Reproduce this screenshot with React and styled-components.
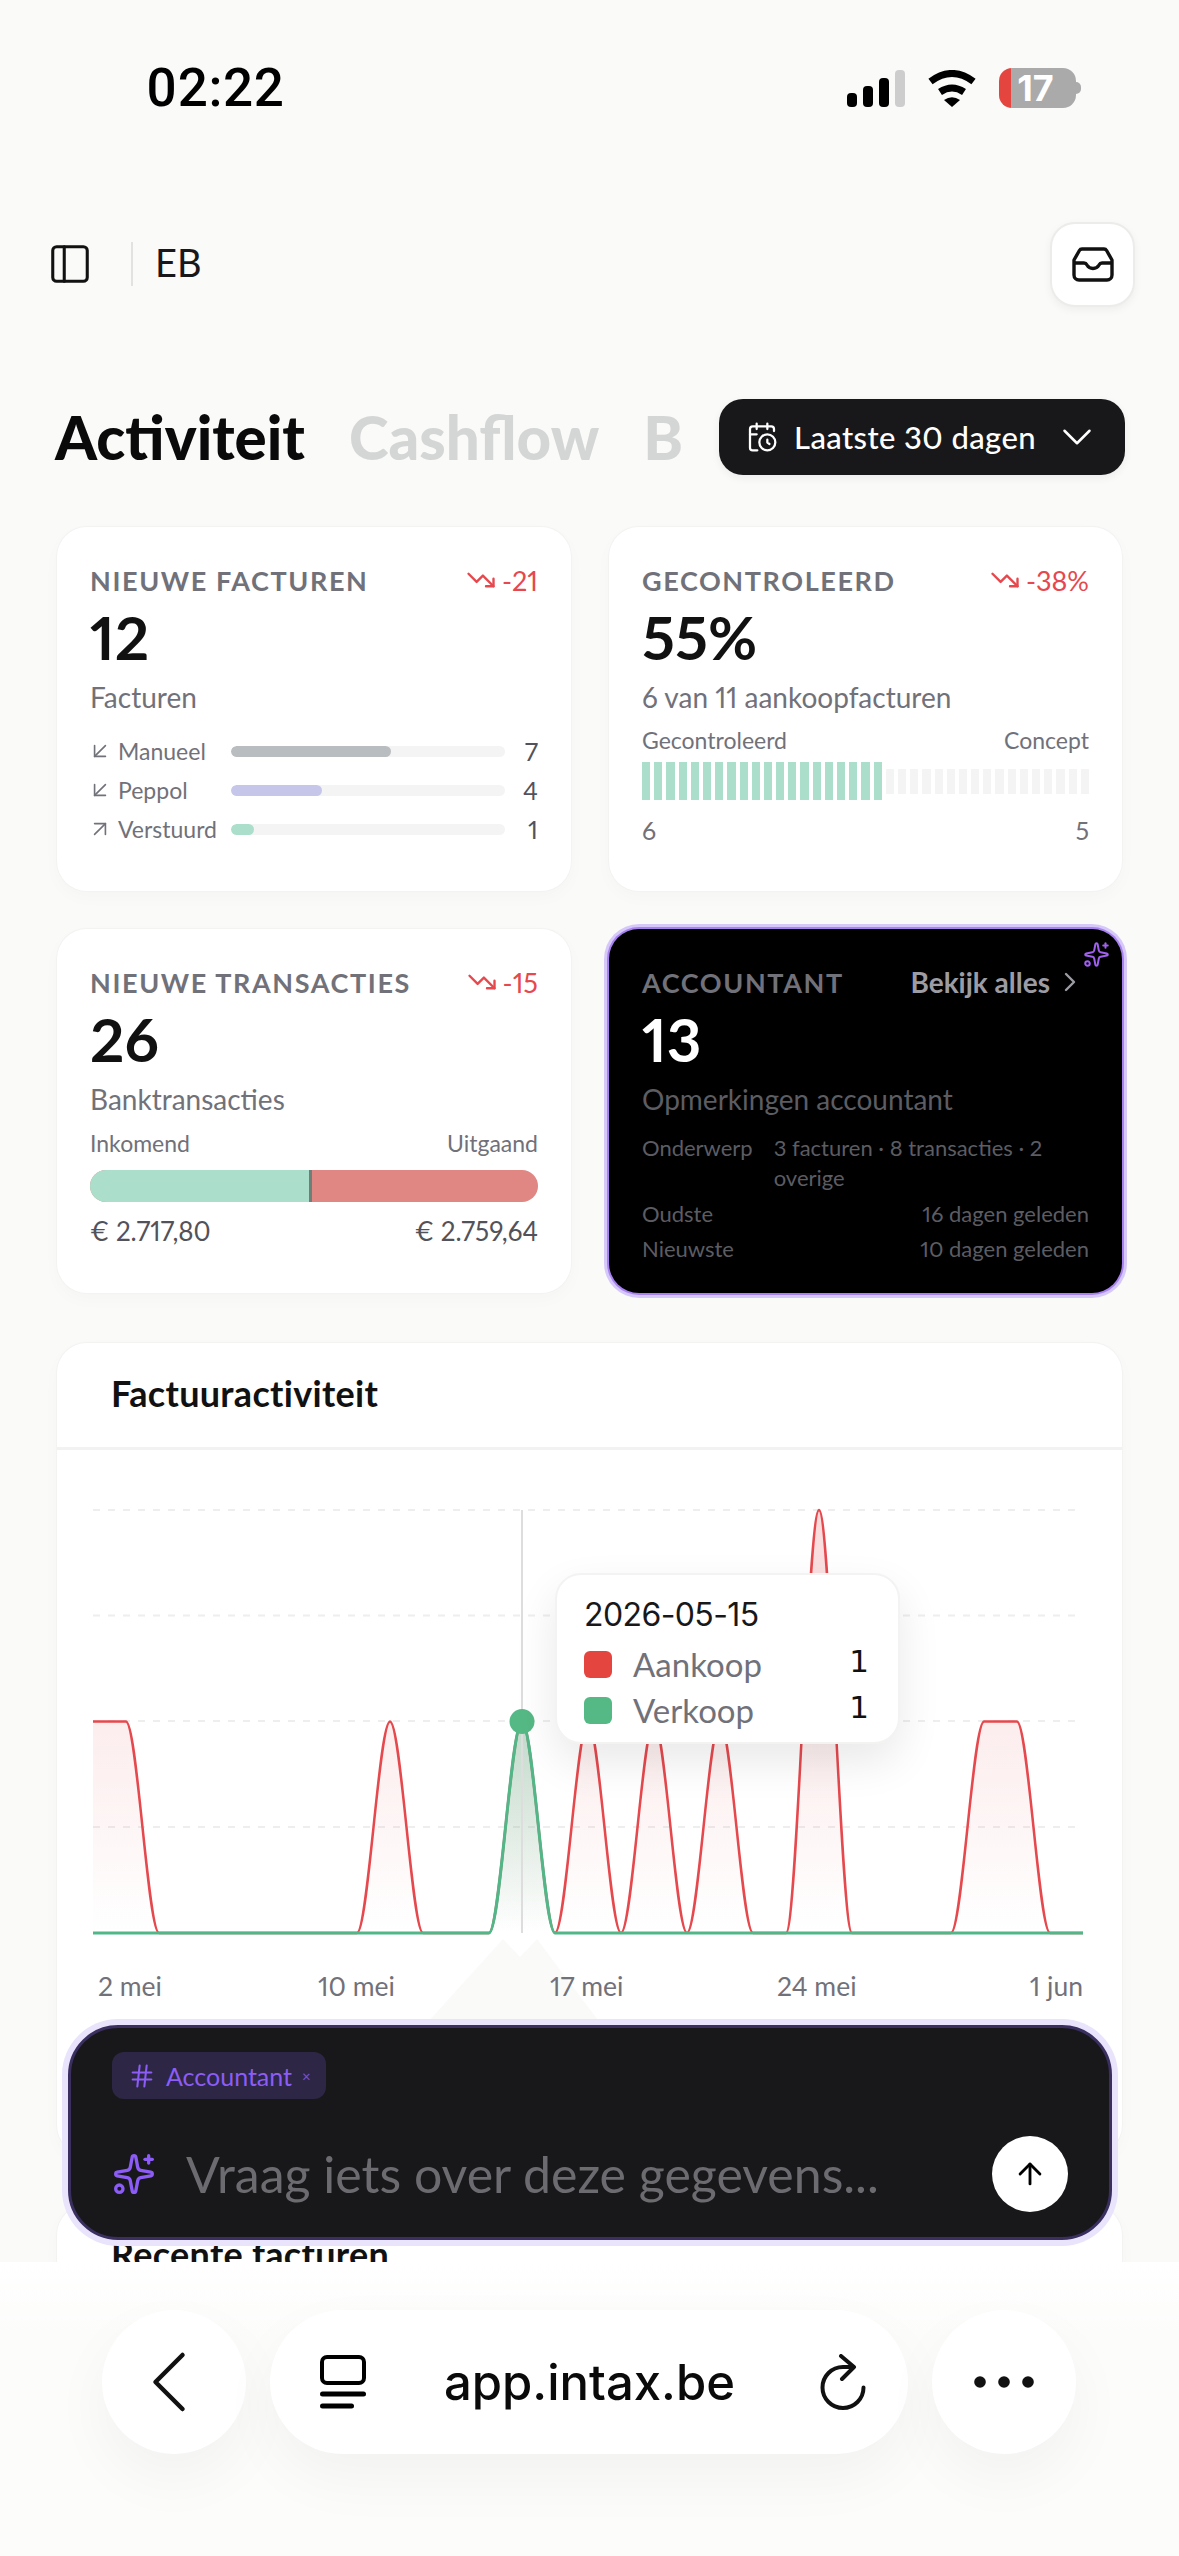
import React from 'react';
import styled, {createGlobalStyle} from 'styled-components';
import {PanelLeft, CalendarClock, ChevronDown, ChevronRight, TrendingDown, ArrowDownLeft, ArrowUpRight, Sparkles, Hash, ArrowUp, ChevronLeft} from 'lucide-react';

const GlobalStyle = createGlobalStyle`
  html, body {
    margin: 0;
    padding: 0;
    background: #fafaf9;
  }
  * { box-sizing: border-box; }
`;

const Page = styled.div`
  position: relative;
  width: 1179px;
  height: 2556px;
  overflow: hidden;
  background: #fafaf9;
  font-family: Lato, "Noto Sans", sans-serif;
  font-feature-settings: "pnum", "lnum";
  color: #111;
`;

const StatusBar = styled.div`
  display: flex;
  align-items: center;
  justify-content: space-between;
  height: 42px;
  margin-top: 67px;
  padding: 0 98px 0 146px;
`;

const Time = styled.div`
  font-family: Roboto, sans-serif;
  font-size: 53px;
  font-weight: 500;
  letter-spacing: 0.6px;
  line-height: 42px;
  color: #000;
`;

const StatusIcons = styled.div`
  display: flex;
  align-items: center;
  gap: 22px;
`;

const BatteryWrap = styled.div`
  display: flex;
  align-items: center;
`;

const Battery = styled.div`
  width: 77px;
  height: 40px;
  padding-right: 4px;
  border-radius: 13px;
  background: linear-gradient(90deg, #e5453f 0 12px, #aaaaaa 12px);
  color: #fff;
  font-family: Inter, sans-serif;
  font-size: 36px;
  font-weight: 700;
  line-height: 40px;
  text-align: center;
`;

const BatteryCap = styled.div`
  width: 5px;
  height: 12px;
  border-radius: 0 5px 5px 0;
  background: #aaaaaa;
`;

const Header = styled.div`
  display: flex;
  align-items: center;
  margin-top: 113px;
  padding: 0 44px 0 47px;
  height: 84px;
`;

const Divider = styled.div`
  width: 2px;
  height: 44px;
  margin: 0 22px 0 38px;
  background: #e2e2e1;
`;

const Initials = styled.div`
  flex: 1;
  padding-bottom: 5px;
  font-size: 38px;
  color: #18181b;
`;

const InboxButton = styled.div`
  display: flex;
  align-items: center;
  justify-content: center;
  width: 85px;
  height: 85px;
  border-radius: 25px;
  background: #fff;
  border: 2px solid #ececea;
  box-shadow: 0 3px 8px rgba(0, 0, 0, 0.05);
`;

const TabsRow = styled.div`
  display: flex;
  align-items: center;
  margin-top: 93px;
  padding: 0 54px 0 55px;
  height: 76px;
`;

const Tab = styled.div`
  margin-right: 44px;
  font-size: 60px;
  font-weight: 900;
  color: ${p => (p.$active ? '#0a0a0a' : '#d4d5d5')};

  &:nth-child(3) { margin-right: 0; }
`;

const RangeButton = styled.div`
  display: flex;
  flex: 0 0 404px;
  align-items: center;
  height: 76px;
  margin-left: auto;
  padding: 0 23px 0 27px;
  border-radius: 24px;
  background: #18181b;
  color: #fff;
  font-size: 31px;
  font-weight: 500;
  letter-spacing: 0.4px;
  white-space: nowrap;
  gap: 16px;
  box-shadow: 0 3px 8px rgba(0, 0, 0, 0.06);

  svg:last-child { margin-left: auto; }
`;

const CardGrid = styled.div`
  display: grid;
  grid-template-columns: 514px 513px;
  grid-auto-rows: 364px;
  gap: 38px;
  margin: 52px 0 0 57px;
`;

const Card = styled.div`
  position: relative;
  display: flex;
  flex-direction: column;
  padding: 35px 33px 0 33px;
  border-radius: 30px;
  background: ${p => (p.$dark ? '#000' : '#fff')};
  box-shadow: ${p => (p.$dark
    ? '0 0 0 2px #a982f2, 0 0 0 5px #d6c9fa'
    : '0 0 0 1px #f3f3f2, 0 6px 18px rgba(0, 0, 0, 0.025)')};
`;

const CardTop = styled.div`
  display: flex;
  align-items: center;
  justify-content: space-between;
  height: 36px;
`;

const CardTitle = styled.div`
  font-size: 27px;
  font-weight: 700;
  letter-spacing: 1.6px;
  color: #71717a;
  white-space: nowrap;
`;

const Delta = styled.div`
  display: flex;
  align-items: center;
  gap: 6px;
  font-size: 27px;
  color: #e5484d;
`;

const BigNumber = styled.div`
  margin-top: 7px;
  font-size: 60px;
  font-weight: 700;
  line-height: 64px;
  color: ${p => (p.$dark ? '#fff' : '#111')};
`;

const SubText = styled.div`
  margin-top: 11px;
  font-size: 28px;
  line-height: 34px;
  color: ${p => (p.$dark ? '#5c5c63' : '#71717a')};
`;

const BarRows = styled.div`
  display: flex;
  flex-direction: column;
  gap: 9px;
  margin-top: 22px;
`;

const BarRow = styled.div`
  display: grid;
  grid-template-columns: 28px 113px 274px 1fr;
  align-items: center;
  height: 30px;
  font-size: 23px;
  color: #71717a;
  svg { margin-left: -3px; }
`;

const Track = styled.div`
  height: 11px;
  border-radius: 6px;
  overflow: hidden;
  background: #f4f4f5;
`;

const Fill = styled.div`
  height: 100%;
  border-radius: 6px;
  background: ${p => p.$color};
`;

const RowValue = styled.div`
  text-align: right;
  font-size: 25px;
  color: #52525b;
`;

const SplitRow = styled.div`
  display: flex;
  justify-content: space-between;
  font-size: ${p => p.$size || 23}px;
  color: ${p => p.$color || '#71717a'};
  margin-top: ${p => p.$top || 0}px;
  line-height: 30px;
`;

const Ticks = styled.div`
  display: flex;
  gap: 4px;
  align-items: center;
  height: 38px;
  margin-top: 7px;
`;

const Tick = styled.div`
  flex: 1;
  height: ${p => (p.$on ? 38 : 25)}px;
  background: ${p => (p.$on ? '#abdfcb' : '#f4f4f5')};
`;

const FlowBar = styled.div`
  display: flex;
  height: 32px;
  margin-top: 12px;
  border-radius: 16px;
  overflow: hidden;
  background: #e08683;
`;

const FlowIn = styled.div`
  background: #abdfcb;
  border-right: 3px solid #6f7f78;
`;

const SparkCorner = styled.div`
  position: absolute;
  top: 12px;
  right: 12px;
  color: #a160f0;
  display: flex;
`;

const AllLink = styled.div`
  display: flex;
  align-items: center;
  gap: 4px;
  margin-right: 3px;
  font-size: 28px;
  font-weight: 700;
  color: #9c9ca4;
`;

const DetailRow = styled.div`
  display: flex;
  justify-content: space-between;
  gap: 21px;
  margin-top: ${p => p.$top || 0}px;
  font-size: 22px;
  line-height: 30px;
  color: #5c5c63;
`;

const ChartCard = styled.div`
  position: relative;
  width: 1065px;
  height: 812px;
  margin: 50px 0 0 57px;
  border-radius: 30px;
  background: #fff;
  box-shadow: 0 0 0 1px #f3f3f2, 0 6px 18px rgba(0, 0, 0, 0.025);
`;

const PanelTitle = styled.div`
  display: flex;
  align-items: center;
  height: 107px;
  padding: 0 0 4px 54px;
  border-bottom: 3px solid #f2f2f1;
  font-size: 36px;
  font-weight: 700;
  letter-spacing: 0.3px;
  color: #111;
`;

const ChartSvg = styled.svg`
  display: block;
  width: 1065px;
  height: 600px;
  font-family: Lato, sans-serif;
  font-feature-settings: "pnum", "lnum";
`;

const Tooltip = styled.div`
  position: absolute;
  left: 498px;
  top: 230px;
  width: 345px;
  height: 171px;
  padding: 20px 29px 0 27px;
  border-radius: 26px;
  background: #fff;
  border: 2px solid #f3f3f2;
  box-shadow: 0 18px 44px rgba(0, 0, 0, 0.09);
`;

const TipDate = styled.div`
  font-size: 32px;
  line-height: 40px;
  color: #18181b;
  font-family: Inter, sans-serif;
  letter-spacing: -0.6px;
  margin-bottom: 6px;
`;

const TipRow = styled.div`
  display: flex;
  align-items: center;
  height: 46px;
  font-size: 33px;
  color: #71717a;
`;

const Swatch = styled.div`
  width: 28px;
  height: 27px;
  margin-right: 21px;
  border-radius: 6px;
  background: ${p => p.$color};
`;

const TipValue = styled.div`
  margin: -6px 0 0 auto;
  color: #111;
  font-family: "DejaVu Sans", sans-serif;
  font-size: 31px;
`;

const NextCard = styled(ChartCard)`
  height: 300px;
  margin-top: 50px;
`;

const NextTitle = styled.div`
  padding: 27px 0 0 54px;
  font-size: 36px;
  font-weight: 700;
  letter-spacing: 0.3px;
  color: #111;
`;

const Composer = styled.div`
  position: absolute;
  left: 68px;
  top: 2025px;
  display: flex;
  flex-direction: column;
  justify-content: space-between;
  width: 1044px;
  height: 215px;
  padding: 24px 41px 25px 41px;
  border: 3px solid #3a2f5f;
  border-radius: 50px;
  background: #18181b;
  box-shadow: 0 0 0 6px #e9e3fb;
`;

const Chip = styled.div`
  display: flex;
  align-items: center;
  align-self: flex-start;
  height: 47px;
  padding: 0 15px 0 16px;
  gap: 10px;
  border-radius: 12px;
  background: #2d2645;
  color: #8b5cf6;
  font-size: 25px;
`;

const ChipClose = styled.span`
  font-size: 15px;
  opacity: 0.8;
`;

const ComposerRow = styled.div`
  display: flex;
  align-items: center;
  gap: 30px;
  color: #8b5cf6;
`;

const Placeholder = styled.div`
  flex: 1;
  font-size: 50px;
  color: #6b6b70;
  white-space: nowrap;
`;

const SendButton = styled.div`
  display: flex;
  align-items: center;
  justify-content: center;
  width: 76px;
  height: 76px;
  border-radius: 50%;
  background: #fff;
  color: #000;
`;

const BrowserBar = styled.div`
  position: absolute;
  left: 0;
  right: 0;
  top: 2262px;
  bottom: 0;
  display: flex;
  align-items: flex-start;
  gap: 24px;
  padding: 48px 0 0 102px;
  background: linear-gradient(#ffffff, #fcfcfb 25%, #fcfcfb);
`;

const RoundButton = styled.div`
  display: flex;
  align-items: center;
  justify-content: center;
  width: 144px;
  height: 144px;
  border-radius: 50%;
  background: #fff;
  box-shadow: 0 24px 60px rgba(0, 0, 0, 0.045);
`;

const BackIcon = styled(ChevronLeft)`
  margin-right: 10px;
`;

const UrlPill = styled.div`
  display: flex;
  align-items: center;
  justify-content: space-between;
  width: 638px;
  height: 144px;
  padding: 0 41px 0 50px;
  border-radius: 72px;
  background: #fff;
  box-shadow: 0 24px 60px rgba(0, 0, 0, 0.045);
`;

const UrlText = styled.div`
  margin-right: 6px;
  font-family: Inter, sans-serif;
  font-size: 49px;
  font-weight: 500;
  color: #0a0a0a;
`;

const sources = [
  {label: 'Manueel', value: 7, color: '#b9bdc0', Icon: ArrowDownLeft},
  {label: 'Peppol', value: 4, color: '#c5c6ea', Icon: ArrowDownLeft},
  {label: 'Verstuurd', value: 1, color: '#abdfcb', Icon: ArrowUpRight},
];

const axis = [
  {text: '2 mei', x: 41},
  {text: '10 mei', x: 261},
  {text: '17 mei', x: 493},
  {text: '24 mei', x: 720},
  {text: '1 jun', x: 1026, anchor: 'end'},
];

const purchases = [1, 1, 0, 0, 0, 0, 0, 0, 0, 1, 0, 0, 0, 1, 0, 1, 0, 1, 0, 1, 0, 0, 2, 0, 0, 0, 0, 1, 1, 0, 0];
const sales = purchases.map((_, i) => (i === 13 ? 1 : 0));

const X0 = 36;
const STEP = 33;
const BASE = 483;
const UNIT = 211.5;

// same curve as a monotone line: flat tangents at every data point
function linePath(data) {
  return data.map((v, i) => {
    const x = X0 + i * STEP;
    const y = BASE - v * UNIT;
    if (i === 0) return `M${x} ${y}`;
    const px = x - STEP;
    const py = BASE - data[i - 1] * UNIT;
    return `C${px + STEP / 3} ${py} ${x - STEP / 3} ${y} ${x} ${y}`;
  }).join(' ');
}

const areaPath = data => `${linePath(data)} L${X0 + STEP * 30} ${BASE} L${X0} ${BASE} Z`;

function ChartDrawing() {
  return (
    <ChartSvg viewBox="0 0 1065 600">
      <defs>
        <linearGradient id="redFill" x1="0" y1="0" x2="0" y2="1">
          <stop offset="0" stopColor="#e5484d" stopOpacity="0.2" />
          <stop offset="1" stopColor="#e5484d" stopOpacity="0" />
        </linearGradient>
        <linearGradient id="greenFill" x1="0" y1="0" x2="0" y2="1">
          <stop offset="0" stopColor="#52b788" stopOpacity="0.35" />
          <stop offset="1" stopColor="#52b788" stopOpacity="0" />
        </linearGradient>
      </defs>
      <polygon points="369,574 446,489 463,507 480,489 544,574 544,600 369,600" fill="#fafaf9" />
      {[60, 165.5, 271, 377].map(y => (
        <line key={y} x1={X0} x2={1020} y1={y} y2={y} stroke="#eeeeee" strokeWidth="2" strokeDasharray="7 8" />
      ))}
      <path d={areaPath(purchases)} fill="url(#redFill)" />
      <path d={areaPath(sales)} fill="url(#greenFill)" />
      <line x1={465} x2={465} y1={60} y2={BASE} stroke="#dddddd" strokeWidth="2" />
      <path d={linePath(purchases)} fill="none" stroke="#e5484d" strokeWidth="2.5" />
      <path d={linePath(sales)} fill="none" stroke="#52b788" strokeWidth="3" />
      <circle cx={465} cy={271.5} r={12.5} fill="#55b985" />
      {axis.map(a => (
        <text key={a.text} x={a.x} y={546} fontSize="26.5" fill="#71717a" textAnchor={a.anchor}>{a.text}</text>
      ))}
    </ChartSvg>
  );
}

function Signal() {
  return (
    <svg width="58" height="37" viewBox="0 0 58 37" fill="#000">
      <rect x="0" y="23" width="10" height="14" rx="4" />
      <rect x="16" y="16" width="10" height="21" rx="4" />
      <rect x="32" y="8" width="10" height="29" rx="4" />
      <rect x="48" y="0" width="10" height="37" rx="4" fill="#cdcdcd" />
    </svg>
  );
}

function Wifi() {
  return (
    <svg width="50" height="37" viewBox="0 0 50 37" fill="none" stroke="#000" strokeWidth="7">
      <path d="M3.5 11.5 Q25 -4.5 46.5 11.5" />
      <path d="M13 22 Q25 14 37 22" />
      <path d="M25 37 L17 30 Q25 24.5 33 30 Z" fill="#000" stroke="none" />
    </svg>
  );
}

function InboxIcon() {
  return (
    <svg width="42" height="35" viewBox="0 0 42 35" fill="none" stroke="#111" strokeWidth="3.4" strokeLinejoin="round">
      <path d="M10 2 H32 a3 3 0 0 1 2.6 1.5 L40 13 V28 a5 5 0 0 1 -5 5 H7 a5 5 0 0 1 -5 -5 V13 L7.4 3.5 A3 3 0 0 1 10 2 Z" />
      <path d="M2 16 H12 Q14 16 15 18 Q17 21.5 21 21.5 Q25 21.5 27 18 Q28 16 30 16 H40" />
    </svg>
  );
}

function TabsIcon() {
  return (
    <svg width="46" height="54" viewBox="0 0 46 54" fill="none" stroke="#000">
      <rect x="2" y="2" width="42" height="26" rx="5" strokeWidth="4" />
      <path d="M2.5 39h41" strokeWidth="5" strokeLinecap="round" />
      <path d="M2.5 51h29" strokeWidth="5" strokeLinecap="round" />
    </svg>
  );
}

function ReloadIcon() {
  return (
    <svg width="48" height="56" viewBox="0 0 48 56" fill="none" stroke="#111" strokeWidth="4" strokeLinecap="round" strokeLinejoin="round">
      <path d="M34 13 H24 A20.5 20.5 0 1 0 44.5 33.5" />
      <path d="M22 2 L35 13 L23 25" />
    </svg>
  );
}

function Dots() {
  return (
    <svg width="60" height="12" viewBox="0 0 60 12" fill="#111">
      <circle cx="6" cy="6" r="5.8" />
      <circle cx="30" cy="6" r="5.8" />
      <circle cx="54" cy="6" r="5.8" />
    </svg>
  );
}

function DeltaBadge({children}) {
  return (
    <Delta>
      <TrendingDown size={30} strokeWidth={1.9} />
      {children}
    </Delta>
  );
}

export default function App() {
  return (
    <Page>
      <GlobalStyle />
      <StatusBar>
        <Time>02:22</Time>
        <StatusIcons>
          <Signal />
          <Wifi />
          <BatteryWrap>
            <Battery>17</Battery>
            <BatteryCap />
          </BatteryWrap>
        </StatusIcons>
      </StatusBar>

      <Header>
        <PanelLeft size={46} strokeWidth={1.6} color="#111" />
        <Divider />
        <Initials>EB</Initials>
        <InboxButton>
          <InboxIcon />
        </InboxButton>
      </Header>

      <TabsRow>
        <Tab $active>Activiteit</Tab>
        <Tab>Cashflow</Tab>
        <Tab>B</Tab>
        <RangeButton>
          <CalendarClock size={32} strokeWidth={1.7} />
          Laatste 30 dagen
          <ChevronDown size={50} strokeWidth={1.2} />
        </RangeButton>
      </TabsRow>

      <CardGrid>
        <Card>
          <CardTop>
            <CardTitle>NIEUWE FACTUREN</CardTitle>
            <DeltaBadge>-21</DeltaBadge>
          </CardTop>
          <BigNumber>12</BigNumber>
          <SubText>Facturen</SubText>
          <BarRows>
            {sources.map(({label, value, color, Icon}) => (
              <BarRow key={label}>
                <Icon size={26} strokeWidth={1.5} />
                <span>{label}</span>
                <Track><Fill $color={color} style={{width: `${value / 12 * 100}%`}} /></Track>
                <RowValue>{value}</RowValue>
              </BarRow>
            ))}
          </BarRows>
        </Card>

        <Card>
          <CardTop>
            <CardTitle>GECONTROLEERD</CardTitle>
            <DeltaBadge>-38%</DeltaBadge>
          </CardTop>
          <BigNumber>55%</BigNumber>
          <SubText>6 van 11 aankoopfacturen</SubText>
          <SplitRow $top={11}>
            <span>Gecontroleerd</span>
            <span>Concept</span>
          </SplitRow>
          <Ticks>
            {Array.from({length: 37}, (_, i) => <Tick key={i} $on={i < 20} />)}
          </Ticks>
          <SplitRow $top={15} $size={25}>
            <span>6</span>
            <span>5</span>
          </SplitRow>
        </Card>

        <Card>
          <CardTop>
            <CardTitle>NIEUWE TRANSACTIES</CardTitle>
            <DeltaBadge>-15</DeltaBadge>
          </CardTop>
          <BigNumber>26</BigNumber>
          <SubText>Banktransacties</SubText>
          <SplitRow $top={12}>
            <span>Inkomend</span>
            <span>Uitgaand</span>
          </SplitRow>
          <FlowBar>
            <FlowIn style={{width: `${2717.8 / (2717.8 + 2759.64) * 100}%`}} />
          </FlowBar>
          <SplitRow $top={14} $size={26} $color="#52525b">
            <span>€ 2.717,80</span>
            <span>€ 2.759,64</span>
          </SplitRow>
        </Card>

        <Card $dark>
          <SparkCorner><Sparkles size={27} strokeWidth={1.8} /></SparkCorner>
          <CardTop>
            <CardTitle>ACCOUNTANT</CardTitle>
            <AllLink>
              Bekijk alles
              <ChevronRight size={32} strokeWidth={1.8} />
            </AllLink>
          </CardTop>
          <BigNumber $dark>13</BigNumber>
          <SubText $dark>Opmerkingen accountant</SubText>
          <DetailRow $top={17}>
            <span>Onderwerp</span>
            <span>3 facturen · 8 transacties · 2 overige</span>
          </DetailRow>
          <DetailRow $top={6}>
            <span>Oudste</span>
            <span>16 dagen geleden</span>
          </DetailRow>
          <DetailRow $top={5}>
            <span>Nieuwste</span>
            <span>10 dagen geleden</span>
          </DetailRow>
        </Card>
      </CardGrid>

      <ChartCard>
        <PanelTitle>Factuuractiviteit</PanelTitle>
        <ChartDrawing />
        <Tooltip>
          <TipDate>2026-05-15</TipDate>
          <TipRow>
            <Swatch $color="#e5453f" />
            Aankoop
            <TipValue>1</TipValue>
          </TipRow>
          <TipRow>
            <Swatch $color="#55b985" />
            Verkoop
            <TipValue>1</TipValue>
          </TipRow>
        </Tooltip>
      </ChartCard>

      <NextCard>
        <NextTitle>Recente facturen</NextTitle>
      </NextCard>

      <Composer>
        <Chip>
          <Hash size={28} strokeWidth={1.8} />
          Accountant
          <ChipClose>×</ChipClose>
        </Chip>
        <ComposerRow>
          <Sparkles size={44} strokeWidth={1.8} />
          <Placeholder>Vraag iets over deze gegevens...</Placeholder>
          <SendButton><ArrowUp size={34} strokeWidth={2} /></SendButton>
        </ComposerRow>
      </Composer>

      <BrowserBar>
        <RoundButton><BackIcon size={108} strokeWidth={1} color="#111" /></RoundButton>
        <UrlPill>
          <TabsIcon />
          <UrlText>app.intax.be</UrlText>
          <ReloadIcon />
        </UrlPill>
        <RoundButton><Dots /></RoundButton>
      </BrowserBar>
    </Page>
  );
}
